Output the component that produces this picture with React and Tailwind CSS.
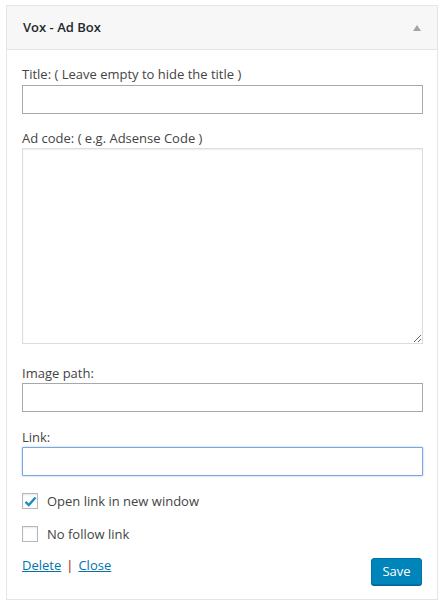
import React from "react";

const font = { fontFamily: '"Open Sans", "Liberation Sans", sans-serif' };

const Label = ({ children, className = "" }) => (
  <label className={`block text-[13px] leading-[20px] text-[#444] ${className}`}>{children}</label>
);

const App = () => {
  return (
    <div className="min-h-screen bg-white pt-[5px] pl-[6px]" style={font}>
      <div className="w-[432px] border border-[#e5e5e5] bg-white">
        <div className="flex h-[44px] items-center justify-between border-b border-[#e5e5e5] bg-[#f7f7f7] pl-[16px] pr-[16px]">
          <h3 className="text-[13px] font-semibold text-[#23282d]">Vox - Ad Box</h3>
          <svg width="8" height="6" viewBox="0 0 8 6" className="mt-[1px]">
            <path d="M4 0 L8 6 L0 6 Z" fill="#a0a5aa" />
          </svg>
        </div>

        <div className="px-[15px] pt-[14px] pb-[14px]">
          <Label>Title: ( Leave empty to hide the title )</Label>
          <input type="text" className="mt-[1px] block h-[29px] w-[401px] border border-[#a8a8a8] bg-white outline-none" />

          <Label className="mt-[14px]">Ad code: ( e.g. Adsense Code )</Label>
          <textarea className="block h-[196px] w-[401px] resize-y border border-[#dddddd] bg-white shadow-[inset_0_1px_2px_rgba(0,0,0,0.07)] outline-none" />

          <Label className="mt-[19px]">Image path:</Label>
          <input type="text" className="block h-[29px] w-[401px] border border-[#a8a8a8] bg-white outline-none" />

          <Label className="mt-[15px]">Link:</Label>
          <input type="text" className="block h-[29px] w-[401px] rounded-[1px] border border-[#7ea4e4] bg-white shadow-[0_0_2px_rgba(30,140,190,0.5)] outline-none" />

          <div className="mt-[16px] flex items-center">
            <span className="flex h-[16px] w-[16px] items-center justify-center border border-[#b4b9be] bg-white shadow-[inset_0_1px_2px_rgba(0,0,0,0.1)]">
              <svg width="13" height="11" viewBox="0 0 13 11">
                <path d="M1.5 5.8 L4.8 9 L11.5 1.5" fill="none" stroke="#1e8cbe" strokeWidth="2.4" />
              </svg>
            </span>
            <span className="ml-[9px] text-[13px] leading-[18px] text-[#444]">Open link in new window</span>
          </div>

          <div className="mt-[15px] flex items-center">
            <span className="block h-[16px] w-[16px] border border-[#b4b9be] bg-white shadow-[inset_0_1px_2px_rgba(0,0,0,0.1)]" />
            <span className="ml-[9px] text-[13px] leading-[18px] text-[#444]">No follow link</span>
          </div>

          <div className="mt-[13px] flex items-start justify-between">
            <div className="text-[13px] leading-[18px]">
              <a href="#" className="text-[#0073aa] underline">Delete</a>
              <span className="mx-[5px] text-[#a00]">|</span>
              <a href="#" className="text-[#0073aa] underline">Close</a>
            </div>
            <button className="mt-[2px] h-[27px] w-[51px] rounded-[3px] border border-[#0073aa] bg-[#0085ba] text-[13px] leading-none text-white shadow-[0_1px_0_#006799]">
              Save
            </button>
          </div>
        </div>
      </div>
    </div>
  );
};

export default App;
